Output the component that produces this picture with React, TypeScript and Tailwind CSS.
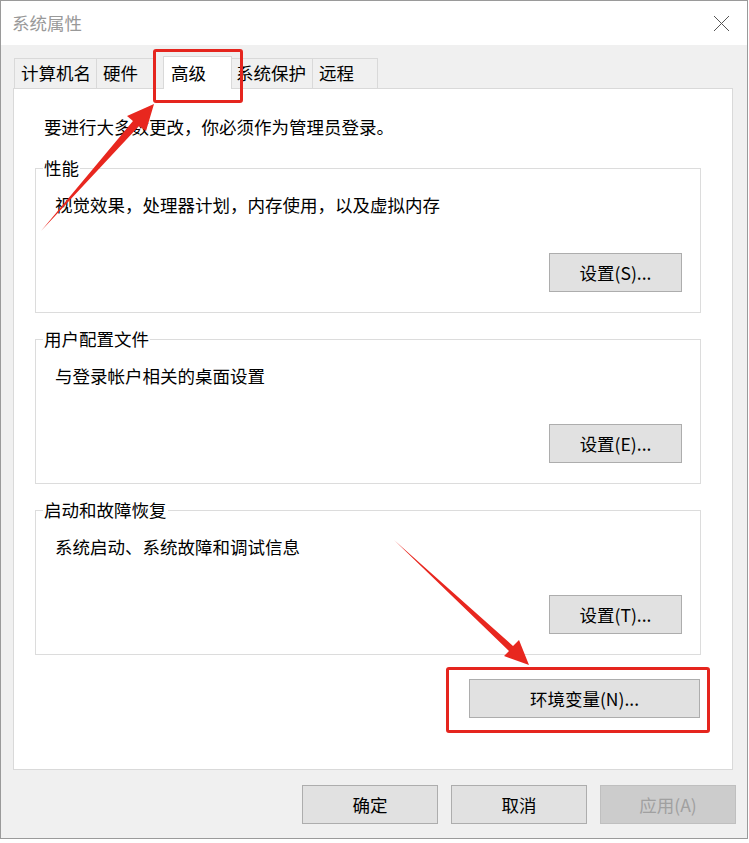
import React from "react";

const FONT = { fontFamily: '"Microsoft YaHei", "Noto Sans CJK SC", "Noto Sans", sans-serif' };

function WinButton({ label, w, disabled }: { label: string; w: string; disabled?: boolean }) {
  return (
    <button
      className={
        disabled
          ? `${w} h-[39px] border border-[#bfbfbf] bg-[#cccccc] text-[#a0a0a0] text-[17.5px] leading-none`
          : `${w} h-[39px] border border-[#adadad] bg-[#e1e1e1] text-black text-[17.5px] leading-none`
      }
    >
      {label}
    </button>
  );
}

function Group({ title, desc, button }: { title: string; desc: string; button: string }) {
  return (
    <fieldset className="w-[666px] border border-[#dcdcdc] pb-[20px]">
      <legend className="ml-[7px] px-[1px] text-[17.5px] leading-[24px]">{title}</legend>
      <div className="pl-[19px] pr-[18px]">
        <p className="mt-[13px] text-[17.5px] leading-[24px]">{desc}</p>
        <div className="mt-[36px] flex justify-end">
          <WinButton label={button} w="w-[133px]" />
        </div>
      </div>
    </fieldset>
  );
}

export default function App() {
  return (
    <div className="relative w-[749px] h-[843px] bg-white text-black" style={FONT}>
      {/* window */}
      <div className="w-[748px] h-[839px] border border-[#9a9a9a] flex flex-col">
        {/* title bar */}
        <div className="h-[44px] bg-white flex items-center justify-between pl-[11px] pr-[17px]">
          <span className="text-[17.5px] text-[#999999]">系统属性</span>
          <svg width="17" height="17" viewBox="0 0 17 17">
            <path d="M1 1 L16 16 M16 1 L1 16" stroke="#555" strokeWidth="1" fill="none" />
          </svg>
        </div>

        {/* body */}
        <div className="flex-1 bg-[#f0f0f0] pl-[12px] pr-[11px] pt-[11px] pb-[14px] flex flex-col">
          {/* tabs */}
          <div className="h-[32px] flex items-end pl-[1px] text-[17.5px]">
            <div className="w-[83px] h-[30px] border border-b-0 border-[#d9d9d9] flex items-center pl-[6px]">计算机名</div>
            <div className="w-[58px] h-[30px] border border-b-0 border-l-0 border-[#d9d9d9] flex items-center pl-[6px]">硬件</div>
            <div className="w-[8px]" />
            <div className="relative z-10 w-[69px] h-[33px] -mb-px bg-white border border-b-0 border-[#d9d9d9] flex items-start pt-[3px] pl-[7px]">高级</div>
            <div className="w-[81px] h-[30px] border border-b-0 border-l-0 border-[#d9d9d9] flex items-center pl-[4px]">系统保护</div>
            <div className="w-[65px] h-[30px] border border-b-0 border-l-0 border-[#d9d9d9] flex items-center pl-[6px]">远程</div>
          </div>

          {/* panel */}
          <div className="w-[720px] h-[682px] bg-white border border-[#d9d9d9] pl-[21px] pt-[26px]">
            <p className="pl-[9px] text-[17.5px] leading-[24px]">要进行大多数更改，你必须作为管理员登录。</p>
            <div className="mt-[17px] flex flex-col gap-[14px]">
              <Group title="性能" desc="视觉效果，处理器计划，内存使用，以及虚拟内存" button="设置(S)..." />
              <Group title="用户配置文件" desc="与登录帐户相关的桌面设置" button="设置(E)..." />
              <Group title="启动和故障恢复" desc="系统启动、系统故障和调试信息" button="设置(T)..." />
            </div>
            <div className="mt-[24px] w-[665px] flex justify-end">
              <WinButton label="环境变量(N)..." w="w-[231px]" />
            </div>
          </div>

          {/* dialog buttons */}
          <div className="mt-[15px] flex justify-end gap-[13px]">
            <WinButton label="确定" w="w-[136px]" />
            <WinButton label="取消" w="w-[136px]" />
            <WinButton label="应用(A)" w="w-[136px]" disabled />
          </div>
        </div>
      </div>

      {/* annotations */}
      <div className="absolute left-[153px] top-[49px] w-[90px] h-[54px] border-[3px] border-[#e5251e] rounded-[3px]" />
      <div className="absolute left-[446px] top-[667px] w-[264px] h-[66px] border-[3px] border-[#e5251e] rounded-[3px]" />
      <svg className="absolute left-0 top-0 pointer-events-none" width="749" height="843">
        <polygon
          points="41,231 133,121 127,116 154,104 146,131 139,126"
          fill="#e8271f"
        />
        <polygon
          points="394,540 509,651 504,656 529,665 519,640 513,646"
          fill="#e8271f"
        />
      </svg>
    </div>
  );
}
